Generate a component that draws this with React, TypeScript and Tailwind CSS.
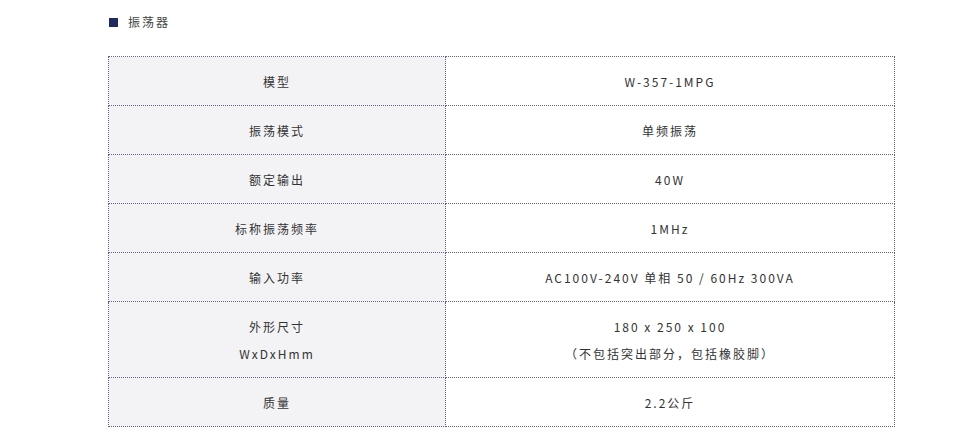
const rows: { label: string[]; value: string[] }[] = [
  { label: ["模型"], value: ["W-357-1MPG"] },
  { label: ["振荡模式"], value: ["单频振荡"] },
  { label: ["额定输出"], value: ["40W"] },
  { label: ["标称振荡频率"], value: ["1MHz"] },
  { label: ["输入功率"], value: ["AC100V-240V 单相 50 / 60Hz 300VA"] },
  { label: ["外形尺寸", "WxDxHmm"], value: ["180 x 250 x 100", "（不包括突出部分，包括橡胶脚）"] },
  { label: ["质量"], value: ["2.2公斤"] },
];

export default function App() {
  return (
    <div
      className="min-h-[448px] w-[975px] bg-white text-[#333] pt-[14px]"
      style={{ fontFamily: '"Noto Sans CJK SC", "Noto Sans", sans-serif' }}
    >
      <div className="ml-[109px] flex items-center gap-[10px]">
        <span className="inline-block h-[9px] w-[9px] bg-[#1f2a5e]" />
        <span className="text-[12px] leading-[16px] tracking-[2px] text-[#444]">振荡器</span>
      </div>

      <table className="ml-[108px] mt-[26px] w-[787px] border-collapse text-[12px] leading-[27px] tracking-[2px]">
        <tbody>
          {rows.map((r) => (
            <tr key={r.label[0]}>
              <td className="w-[337px] border border-dotted border-[#5d6286] bg-[#f3f3f6] pt-[11px] pb-[10px] text-center">
                {r.label.map((l) => (
                  <div key={l}>{l}</div>
                ))}
              </td>
              <td className="border border-dotted border-[#5d6286] pt-[11px] pb-[10px] text-center">
                {r.value.map((v) => (
                  <div key={v}>{v}</div>
                ))}
              </td>
            </tr>
          ))}
        </tbody>
      </table>
    </div>
  );
}
